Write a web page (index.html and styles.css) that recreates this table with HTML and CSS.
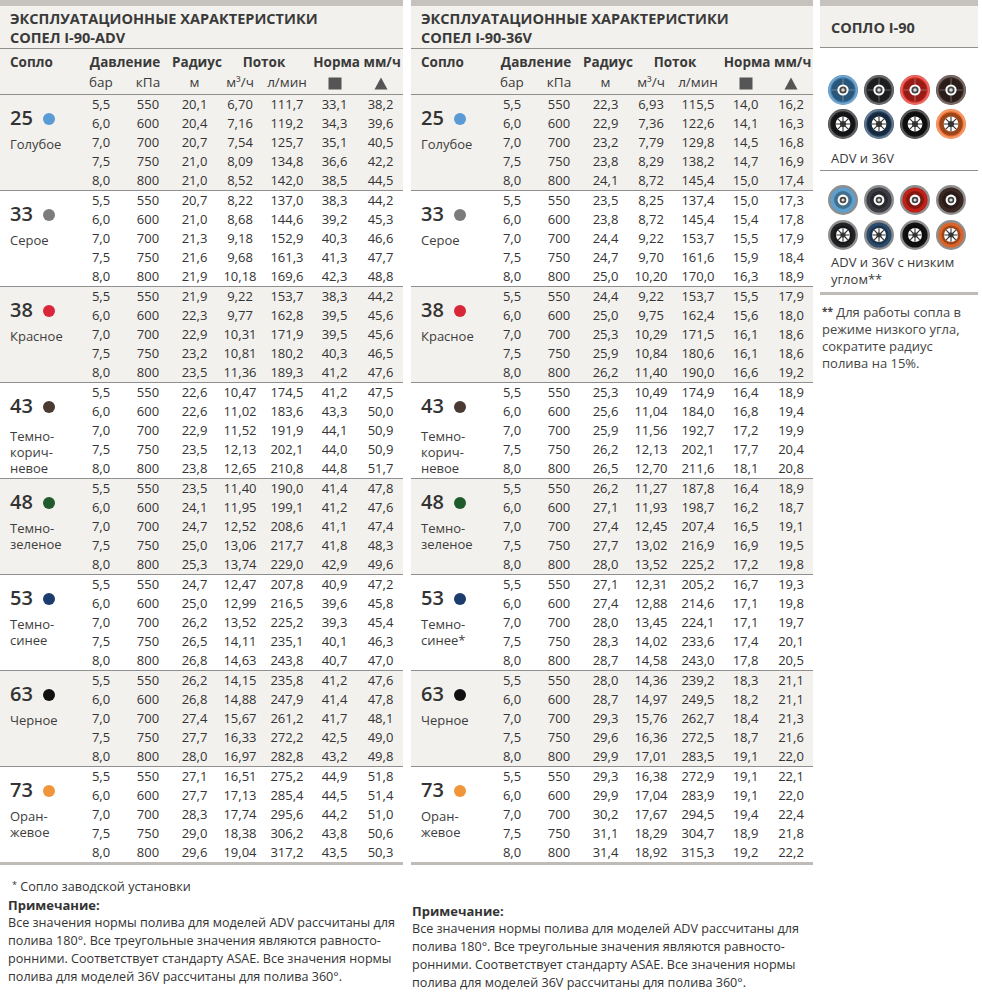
FILE: index.html
```html
<!DOCTYPE html>
<html lang="ru">
<head>
<meta charset="utf-8">
<title>Сопла I-90</title>
<link rel="stylesheet" href="styles.css">
</head>
<body>
<svg class="defs" aria-hidden="true">
  <symbol id="nzx" viewBox="0 0 30 30">
    <circle cx="15" cy="15" r="15" fill="currentColor"/>
    <circle cx="15" cy="15" r="13.7" fill="none" stroke="#fff" stroke-opacity=".3" stroke-width="2"/>
    <circle cx="15" cy="15" r="11.6" fill="#000" fill-opacity=".32"/>
    <path d="M15 3.5V26.5M3.5 15H26.5" stroke="#fff" stroke-opacity=".3" stroke-width="1.1"/>
    <circle cx="15" cy="15" r="5.6" fill="#fff"/>
    <circle cx="15" cy="15" r="3.6" fill="#444"/>
    <circle cx="15" cy="15" r="1.8" fill="#ddd"/>
  </symbol>
  <symbol id="nzs" viewBox="0 0 30 30">
    <circle cx="15" cy="15" r="15" fill="currentColor"/>
    <circle cx="15" cy="15" r="13.7" fill="none" stroke="#fff" stroke-opacity=".3" stroke-width="2"/>
    <circle cx="15" cy="15" r="11.6" fill="#000" fill-opacity=".35"/>
    <circle cx="15" cy="15" r="7.4" fill="#fff"/>
    <circle cx="15" cy="15" r="3.1" fill="#333"/>
    <path d="M18 15H22.4M17.1 17.1L20.2 20.2M15 18V22.4M12.9 17.1L9.8 20.2M12 15H7.6M12.9 12.9L9.8 9.8M15 12V7.6M17.1 12.9L20.2 9.8" stroke="#333" stroke-width="1.1"/>
  </symbol>
  <symbol id="nzl1" viewBox="0 0 30 30">
    <circle cx="15" cy="15" r="15" fill="#8e8e8e"/>
    <circle cx="15" cy="15" r="12.6" fill="currentColor"/>
    <circle cx="15" cy="15" r="9" fill="#000" fill-opacity=".3"/>
    <circle cx="15" cy="15" r="5.4" fill="#fff"/>
    <circle cx="15" cy="15" r="3.3" fill="#444"/>
    <circle cx="15" cy="15" r="1.6" fill="#ddd"/>
  </symbol>
  <symbol id="nzl2" viewBox="0 0 30 30">
    <circle cx="15" cy="15" r="15" fill="#8e8e8e"/>
    <circle cx="15" cy="15" r="12.6" fill="currentColor"/>
    <circle cx="15" cy="15" r="9.6" fill="#000" fill-opacity=".3"/>
    <circle cx="15" cy="15" r="7" fill="#fff"/>
    <circle cx="15" cy="15" r="2.8" fill="#333"/>
    <path d="M17.8 15H21.7M17 17L19.8 19.8M15 17.8V21.7M13 17L10.2 19.8M12.2 15H8.3M13 13L10.2 10.2M15 12.2V8.3M17 13L19.8 10.2" stroke="#333" stroke-width="1.1"/>
  </symbol>
</svg>

<div class="page">
  <!-- ADV table -->
  <section class="col col-adv">
    <div class="tbl">
      <div class="title">ЭКСПЛУАТАЦИОННЫЕ ХАРАКТЕРИСТИКИ<br>СОПЕЛ I-90-ADV</div>
      <div class="thead">
        <b class="h-l">Сопло</b><b class="s2">Давление</b><b>Радиус</b><b class="s2">Поток</b><b class="s2">Норма мм/ч</b>
        <span></span><span>бар</span><span>кПа</span><span>м</span><span>м³/ч</span><span>л/мин</span>
        <span><svg class="ico" viewBox="0 0 14 13"><rect x="0.5" y="0.5" width="13" height="12" fill="#555"/></svg></span>
        <span><svg class="ico" viewBox="0 0 14 13"><path d="M7 0.5L13.5 12.5H0.5Z" fill="#555"/></svg></span>
      </div>

      <div class="grp alt">
        <div class="nm"><div class="no">25<i class="dot d25"></i></div><div class="cn">Голубое</div></div>
        <span>5,5</span><span>550</span><span>20,1</span><span>6,70</span><span>111,7</span><span>33,1</span><span>38,2</span>
        <span>6,0</span><span>600</span><span>20,4</span><span>7,16</span><span>119,2</span><span>34,3</span><span>39,6</span>
        <span>7,0</span><span>700</span><span>20,7</span><span>7,54</span><span>125,7</span><span>35,1</span><span>40,5</span>
        <span>7,5</span><span>750</span><span>21,0</span><span>8,09</span><span>134,8</span><span>36,6</span><span>42,2</span>
        <span>8,0</span><span>800</span><span>21,0</span><span>8,52</span><span>142,0</span><span>38,5</span><span>44,5</span>
      </div>
      <div class="grp">
        <div class="nm"><div class="no">33<i class="dot d33"></i></div><div class="cn">Серое</div></div>
        <span>5,5</span><span>550</span><span>20,7</span><span>8,22</span><span>137,0</span><span>38,3</span><span>44,2</span>
        <span>6,0</span><span>600</span><span>21,0</span><span>8,68</span><span>144,6</span><span>39,2</span><span>45,3</span>
        <span>7,0</span><span>700</span><span>21,3</span><span>9,18</span><span>152,9</span><span>40,3</span><span>46,6</span>
        <span>7,5</span><span>750</span><span>21,6</span><span>9,68</span><span>161,3</span><span>41,3</span><span>47,7</span>
        <span>8,0</span><span>800</span><span>21,9</span><span>10,18</span><span>169,6</span><span>42,3</span><span>48,8</span>
      </div>
      <div class="grp alt">
        <div class="nm"><div class="no">38<i class="dot d38"></i></div><div class="cn">Красное</div></div>
        <span>5,5</span><span>550</span><span>21,9</span><span>9,22</span><span>153,7</span><span>38,3</span><span>44,2</span>
        <span>6,0</span><span>600</span><span>22,3</span><span>9,77</span><span>162,8</span><span>39,5</span><span>45,6</span>
        <span>7,0</span><span>700</span><span>22,9</span><span>10,31</span><span>171,9</span><span>39,5</span><span>45,6</span>
        <span>7,5</span><span>750</span><span>23,2</span><span>10,81</span><span>180,2</span><span>40,3</span><span>46,5</span>
        <span>8,0</span><span>800</span><span>23,5</span><span>11,36</span><span>189,3</span><span>41,2</span><span>47,6</span>
      </div>
      <div class="grp">
        <div class="nm"><div class="no">43<i class="dot d43"></i></div><div class="cn low">Темно-<br>корич-<br>невое</div></div>
        <span>5,5</span><span>550</span><span>22,6</span><span>10,47</span><span>174,5</span><span>41,2</span><span>47,5</span>
        <span>6,0</span><span>600</span><span>22,6</span><span>11,02</span><span>183,6</span><span>43,3</span><span>50,0</span>
        <span>7,0</span><span>700</span><span>22,9</span><span>11,52</span><span>191,9</span><span>44,1</span><span>50,9</span>
        <span>7,5</span><span>750</span><span>23,5</span><span>12,13</span><span>202,1</span><span>44,0</span><span>50,9</span>
        <span>8,0</span><span>800</span><span>23,8</span><span>12,65</span><span>210,8</span><span>44,8</span><span>51,7</span>
      </div>
      <div class="grp alt">
        <div class="nm"><div class="no">48<i class="dot d48"></i></div><div class="cn">Темно-<br>зеленое</div></div>
        <span>5,5</span><span>550</span><span>23,5</span><span>11,40</span><span>190,0</span><span>41,4</span><span>47,8</span>
        <span>6,0</span><span>600</span><span>24,1</span><span>11,95</span><span>199,1</span><span>41,2</span><span>47,6</span>
        <span>7,0</span><span>700</span><span>24,7</span><span>12,52</span><span>208,6</span><span>41,1</span><span>47,4</span>
        <span>7,5</span><span>750</span><span>25,0</span><span>13,06</span><span>217,7</span><span>41,8</span><span>48,3</span>
        <span>8,0</span><span>800</span><span>25,3</span><span>13,74</span><span>229,0</span><span>42,9</span><span>49,6</span>
      </div>
      <div class="grp">
        <div class="nm"><div class="no">53<i class="dot d53"></i></div><div class="cn">Темно-<br>синее</div></div>
        <span>5,5</span><span>550</span><span>24,7</span><span>12,47</span><span>207,8</span><span>40,9</span><span>47,2</span>
        <span>6,0</span><span>600</span><span>25,0</span><span>12,99</span><span>216,5</span><span>39,6</span><span>45,8</span>
        <span>7,0</span><span>700</span><span>26,2</span><span>13,52</span><span>225,2</span><span>39,3</span><span>45,4</span>
        <span>7,5</span><span>750</span><span>26,5</span><span>14,11</span><span>235,1</span><span>40,1</span><span>46,3</span>
        <span>8,0</span><span>800</span><span>26,8</span><span>14,63</span><span>243,8</span><span>40,7</span><span>47,0</span>
      </div>
      <div class="grp alt">
        <div class="nm"><div class="no">63<i class="dot d63"></i></div><div class="cn">Черное</div></div>
        <span>5,5</span><span>550</span><span>26,2</span><span>14,15</span><span>235,8</span><span>41,2</span><span>47,6</span>
        <span>6,0</span><span>600</span><span>26,8</span><span>14,88</span><span>247,9</span><span>41,4</span><span>47,8</span>
        <span>7,0</span><span>700</span><span>27,4</span><span>15,67</span><span>261,2</span><span>41,7</span><span>48,1</span>
        <span>7,5</span><span>750</span><span>27,7</span><span>16,33</span><span>272,2</span><span>42,5</span><span>49,0</span>
        <span>8,0</span><span>800</span><span>28,0</span><span>16,97</span><span>282,8</span><span>43,2</span><span>49,8</span>
      </div>
      <div class="grp last">
        <div class="nm"><div class="no">73<i class="dot d73"></i></div><div class="cn">Оран-<br>жевое</div></div>
        <span>5,5</span><span>550</span><span>27,1</span><span>16,51</span><span>275,2</span><span>44,9</span><span>51,8</span>
        <span>6,0</span><span>600</span><span>27,7</span><span>17,13</span><span>285,4</span><span>44,5</span><span>51,4</span>
        <span>7,0</span><span>700</span><span>28,3</span><span>17,74</span><span>295,6</span><span>44,2</span><span>51,0</span>
        <span>7,5</span><span>750</span><span>29,0</span><span>18,38</span><span>306,2</span><span>43,8</span><span>50,6</span>
        <span>8,0</span><span>800</span><span>29,6</span><span>19,04</span><span>317,2</span><span>43,5</span><span>50,3</span>
      </div>
    </div>
    <div class="foot">
      <p class="star"><small>*</small> Сопло заводской установки</p>
      <p class="nt-h">Примечание:</p>
      <p>Все значения нормы полива для моделей ADV рассчитаны для<br>полива 180°. Все треугольные значения являются равносто-<br>ронними. Соответствует стандарту ASAE. Все значения нормы<br>полива для моделей 36V рассчитаны для полива 360°.</p>
    </div>
  </section>

  <!-- 36V table -->
  <section class="col col-36v">
    <div class="tbl">
      <div class="title">ЭКСПЛУАТАЦИОННЫЕ ХАРАКТЕРИСТИКИ<br>СОПЕЛ I-90-36V</div>
      <div class="thead">
        <b class="h-l">Сопло</b><b class="s2">Давление</b><b>Радиус</b><b class="s2">Поток</b><b class="s2">Норма мм/ч</b>
        <span></span><span>бар</span><span>кПа</span><span>м</span><span>м³/ч</span><span>л/мин</span>
        <span><svg class="ico" viewBox="0 0 14 13"><rect x="0.5" y="0.5" width="13" height="12" fill="#555"/></svg></span>
        <span><svg class="ico" viewBox="0 0 14 13"><path d="M7 0.5L13.5 12.5H0.5Z" fill="#555"/></svg></span>
      </div>

      <div class="grp alt">
        <div class="nm"><div class="no">25<i class="dot d25"></i></div><div class="cn">Голубое</div></div>
        <span>5,5</span><span>550</span><span>22,3</span><span>6,93</span><span>115,5</span><span>14,0</span><span>16,2</span>
        <span>6,0</span><span>600</span><span>22,9</span><span>7,36</span><span>122,6</span><span>14,1</span><span>16,3</span>
        <span>7,0</span><span>700</span><span>23,2</span><span>7,79</span><span>129,8</span><span>14,5</span><span>16,8</span>
        <span>7,5</span><span>750</span><span>23,8</span><span>8,29</span><span>138,2</span><span>14,7</span><span>16,9</span>
        <span>8,0</span><span>800</span><span>24,1</span><span>8,72</span><span>145,4</span><span>15,0</span><span>17,4</span>
      </div>
      <div class="grp">
        <div class="nm"><div class="no">33<i class="dot d33"></i></div><div class="cn">Серое</div></div>
        <span>5,5</span><span>550</span><span>23,5</span><span>8,25</span><span>137,4</span><span>15,0</span><span>17,3</span>
        <span>6,0</span><span>600</span><span>23,8</span><span>8,72</span><span>145,4</span><span>15,4</span><span>17,8</span>
        <span>7,0</span><span>700</span><span>24,4</span><span>9,22</span><span>153,7</span><span>15,5</span><span>17,9</span>
        <span>7,5</span><span>750</span><span>24,7</span><span>9,70</span><span>161,6</span><span>15,9</span><span>18,4</span>
        <span>8,0</span><span>800</span><span>25,0</span><span>10,20</span><span>170,0</span><span>16,3</span><span>18,9</span>
      </div>
      <div class="grp alt">
        <div class="nm"><div class="no">38<i class="dot d38"></i></div><div class="cn">Красное</div></div>
        <span>5,5</span><span>550</span><span>24,4</span><span>9,22</span><span>153,7</span><span>15,5</span><span>17,9</span>
        <span>6,0</span><span>600</span><span>25,0</span><span>9,75</span><span>162,4</span><span>15,6</span><span>18,0</span>
        <span>7,0</span><span>700</span><span>25,3</span><span>10,29</span><span>171,5</span><span>16,1</span><span>18,6</span>
        <span>7,5</span><span>750</span><span>25,9</span><span>10,84</span><span>180,6</span><span>16,1</span><span>18,6</span>
        <span>8,0</span><span>800</span><span>26,2</span><span>11,40</span><span>190,0</span><span>16,6</span><span>19,2</span>
      </div>
      <div class="grp">
        <div class="nm"><div class="no">43<i class="dot d43"></i></div><div class="cn low">Темно-<br>корич-<br>невое</div></div>
        <span>5,5</span><span>550</span><span>25,3</span><span>10,49</span><span>174,9</span><span>16,4</span><span>18,9</span>
        <span>6,0</span><span>600</span><span>25,6</span><span>11,04</span><span>184,0</span><span>16,8</span><span>19,4</span>
        <span>7,0</span><span>700</span><span>25,9</span><span>11,56</span><span>192,7</span><span>17,2</span><span>19,9</span>
        <span>7,5</span><span>750</span><span>26,2</span><span>12,13</span><span>202,1</span><span>17,7</span><span>20,4</span>
        <span>8,0</span><span>800</span><span>26,5</span><span>12,70</span><span>211,6</span><span>18,1</span><span>20,8</span>
      </div>
      <div class="grp alt">
        <div class="nm"><div class="no">48<i class="dot d48"></i></div><div class="cn">Темно-<br>зеленое</div></div>
        <span>5,5</span><span>550</span><span>26,2</span><span>11,27</span><span>187,8</span><span>16,4</span><span>18,9</span>
        <span>6,0</span><span>600</span><span>27,1</span><span>11,93</span><span>198,7</span><span>16,2</span><span>18,7</span>
        <span>7,0</span><span>700</span><span>27,4</span><span>12,45</span><span>207,4</span><span>16,5</span><span>19,1</span>
        <span>7,5</span><span>750</span><span>27,7</span><span>13,02</span><span>216,9</span><span>16,9</span><span>19,5</span>
        <span>8,0</span><span>800</span><span>28,0</span><span>13,52</span><span>225,2</span><span>17,2</span><span>19,8</span>
      </div>
      <div class="grp">
        <div class="nm"><div class="no">53<i class="dot d53"></i></div><div class="cn">Темно-<br>синее*</div></div>
        <span>5,5</span><span>550</span><span>27,1</span><span>12,31</span><span>205,2</span><span>16,7</span><span>19,3</span>
        <span>6,0</span><span>600</span><span>27,4</span><span>12,88</span><span>214,6</span><span>17,1</span><span>19,8</span>
        <span>7,0</span><span>700</span><span>28,0</span><span>13,45</span><span>224,1</span><span>17,1</span><span>19,7</span>
        <span>7,5</span><span>750</span><span>28,3</span><span>14,02</span><span>233,6</span><span>17,4</span><span>20,1</span>
        <span>8,0</span><span>800</span><span>28,7</span><span>14,58</span><span>243,0</span><span>17,8</span><span>20,5</span>
      </div>
      <div class="grp alt">
        <div class="nm"><div class="no">63<i class="dot d63"></i></div><div class="cn">Черное</div></div>
        <span>5,5</span><span>550</span><span>28,0</span><span>14,36</span><span>239,2</span><span>18,3</span><span>21,1</span>
        <span>6,0</span><span>600</span><span>28,7</span><span>14,97</span><span>249,5</span><span>18,2</span><span>21,1</span>
        <span>7,0</span><span>700</span><span>29,3</span><span>15,76</span><span>262,7</span><span>18,4</span><span>21,3</span>
        <span>7,5</span><span>750</span><span>29,6</span><span>16,36</span><span>272,5</span><span>18,7</span><span>21,6</span>
        <span>8,0</span><span>800</span><span>29,9</span><span>17,01</span><span>283,5</span><span>19,1</span><span>22,0</span>
      </div>
      <div class="grp last">
        <div class="nm"><div class="no">73<i class="dot d73"></i></div><div class="cn">Оран-<br>жевое</div></div>
        <span>5,5</span><span>550</span><span>29,3</span><span>16,38</span><span>272,9</span><span>19,1</span><span>22,1</span>
        <span>6,0</span><span>600</span><span>29,9</span><span>17,04</span><span>283,9</span><span>19,1</span><span>22,0</span>
        <span>7,0</span><span>700</span><span>30,2</span><span>17,67</span><span>294,5</span><span>19,4</span><span>22,4</span>
        <span>7,5</span><span>750</span><span>31,1</span><span>18,29</span><span>304,7</span><span>18,9</span><span>21,8</span>
        <span>8,0</span><span>800</span><span>31,4</span><span>18,92</span><span>315,3</span><span>19,2</span><span>22,2</span>
      </div>
    </div>
    <div class="foot foot-36v">
      <p class="nt-h">Примечание:</p>
      <p>Все значения нормы полива для моделей ADV рассчитаны для<br>полива 180°. Все треугольные значения являются равносто-<br>ронними. Соответствует стандарту ASAE. Все значения нормы<br>полива для моделей 36V рассчитаны для полива 360°.</p>
    </div>
  </section>

  <!-- side panel -->
  <aside class="side">
    <div class="side-h">СОПЛО I-90</div>
    <div class="nz-set nz-set-1">
      <div class="nz-grid">
        <svg class="nz c-blue"><use href="#nzx"/></svg>
        <svg class="nz c-black"><use href="#nzx"/></svg>
        <svg class="nz c-red"><use href="#nzx"/></svg>
        <svg class="nz c-brown"><use href="#nzx"/></svg>
        <svg class="nz c-black2"><use href="#nzs"/></svg>
        <svg class="nz c-navy"><use href="#nzs"/></svg>
        <svg class="nz c-black3"><use href="#nzs"/></svg>
        <svg class="nz c-orange"><use href="#nzs"/></svg>
      </div>
      <p class="nz-cap">ADV и 36V</p>
    </div>
    <div class="nz-set nz-set-2">
      <div class="nz-grid">
        <svg class="nz l-blue"><use href="#nzl1"/></svg>
        <svg class="nz l-grey"><use href="#nzl1"/></svg>
        <svg class="nz l-red"><use href="#nzl1"/></svg>
        <svg class="nz l-brown"><use href="#nzl1"/></svg>
        <svg class="nz l-black"><use href="#nzl2"/></svg>
        <svg class="nz l-navy"><use href="#nzl2"/></svg>
        <svg class="nz l-black2"><use href="#nzl2"/></svg>
        <svg class="nz l-orange"><use href="#nzl2"/></svg>
      </div>
      <p class="nz-cap">ADV и 36V с низким<br>углом**</p>
    </div>
    <p class="side-note"><b>**</b> Для работы сопла в<br>режиме низкого угла,<br>сократите радиус<br>полива на 15%.</p>
  </aside>
</div>
</body>
</html>
```

FILE: styles.css
```css
* { box-sizing: border-box; }

body {
  margin: 0;
  background: #fff;
  color: #333;
  font-family: "Open Sans", "Noto Sans", sans-serif;
  font-size: 13px;
}

p { margin: 0; }

.defs {
  display: block;
  width: 0;
  height: 0;
  overflow: hidden;
}

.page {
  display: flex;
  align-items: flex-start;
  width: 982px;
}

.col-adv { width: 403px; }
.col-36v { width: 402px; margin-left: 8px; }
.side { width: 158px; margin-left: 7px; }

.col-adv .tbl { --cols: 78px 46px 48px 45px 46px 48px 47px 45px; }
.col-36v .tbl { --cols: 78px 46px 48px 45px 46px 48px 47px 44px; }

.tbl {
  border-top: 6px solid #c6c3bf;
}

.title {
  background: #f3f1ed;
  padding: 3px 10px 1px;
  font-size: 14.5px;
  font-weight: 700;
  line-height: 19px;
  color: #3a3a3a;
  border-bottom: 1px solid #8f8f8f;
  white-space: nowrap;
}

.thead {
  display: grid;
  grid-template-columns: var(--cols);
  grid-template-rows: 20px 20px;
  background: #f3f1ed;
  padding: 3px 0 2px;
  border-bottom: 1px solid #8f8f8f;
  line-height: 20px;
  text-align: center;
  white-space: nowrap;
  color: #3a3a3a;
}

.thead b {
  font-size: 13.5px;
  font-weight: 700;
}

.thead .s2 { grid-column: span 2; }
.thead .h-l { text-align: left; padding-left: 10px; }

.thead span {
  display: flex;
  align-items: center;
  justify-content: center;
  font-size: 13.5px;
}

.ico {
  width: 14px;
  height: 13px;
  margin-top: 2px;
}

.grp {
  display: grid;
  grid-template-columns: var(--cols);
  grid-template-rows: repeat(5, 19px);
  border-top: 1px solid #8f8f8f;
  line-height: 19px;
  text-align: center;
  white-space: nowrap;
}

.thead + .grp { border-top: 0; }

.grp.alt { background: #f3f1ed; }

.grp.last { border-bottom: 3px solid #bfbbb7; }

.nm {
  grid-column: 1;
  grid-row: 1 / 6;
  text-align: left;
  padding: 11px 0 0 10px;
}

.no {
  font-size: 20px;
  font-weight: 600;
  line-height: 24px;
  color: #333;
  display: flex;
  align-items: center;
}

.dot {
  display: inline-block;
  width: 12px;
  height: 12px;
  border-radius: 50%;
  margin-left: 10px;
  margin-top: 1px;
}

.d25 { background: #5b9bd5; }
.d33 { background: #7c7c7c; }
.d38 { background: #d92638; }
.d43 { background: #4b3a32; }
.d48 { background: #1f5b2b; }
.d53 { background: #1d3c6e; }
.d63 { background: #111; }
.d73 { background: #f1953b; }

.cn {
  margin-top: 6px;
  font-size: 13px;
  line-height: 16px;
  color: #3d3d3d;
}

.cn.low { margin-top: 10px; }

.foot {
  padding: 11px 0 0 8px;
  font-size: 12.6px;
  line-height: 18px;
  white-space: nowrap;
  color: #333;
}

.foot-36v { padding-top: 37px; padding-left: 1px; }

.star { padding-left: 4px; }
.star small { font-size: 9px; vertical-align: 3px; }

.nt-h { font-weight: 700; font-size: 13px; }

/* side panel */
.side-h {
  border-top: 6px solid #c6c3bf;
  background: #f3f1ed;
  height: 48px;
  padding: 12px 0 0 11px;
  font-size: 14.5px;
  font-weight: 700;
  line-height: 20px;
  color: #3a3a3a;
  border-bottom: 1px solid #8f8f8f;
}

.nz-grid {
  display: grid;
  grid-template-columns: repeat(4, 30px);
  grid-auto-rows: 30px;
  column-gap: 6px;
  row-gap: 4px;
  padding-left: 8px;
}

.nz {
  width: 30px;
  height: 30px;
  display: block;
}

.nz-set-1 {
  padding-top: 27px;
  padding-bottom: 3px;
  border-bottom: 1px solid #8f8f8f;
}

.nz-set-2 {
  padding-top: 14px;
  padding-bottom: 4px;
  border-bottom: 3px solid #bfbbb7;
}

.nz-set-2 .nz-grid { row-gap: 5px; }

.nz-cap {
  padding-left: 11px;
  font-size: 13px;
  line-height: 17px;
  color: #3a3a3a;
  white-space: nowrap;
}

.nz-set-1 .nz-cap { margin-top: 11px; }
.nz-set-2 .nz-cap { margin-top: 4px; }

.side-note {
  padding: 8px 0 0 2px;
  font-size: 13px;
  line-height: 17px;
  color: #444;
  white-space: nowrap;
}

.side-note b { font-size: 10px; vertical-align: 2px; }

.c-blue { color: #3d7fb3; }
.c-black { color: #2a2b2e; }
.c-red { color: #dc2a22; }
.c-brown { color: #3e2b26; }
.c-black2 { color: #1e1f22; }
.c-navy { color: #22405f; }
.c-black3 { color: #151516; }
.c-orange { color: #ee6d2a; }

.l-blue { color: #5f9fcb; }
.l-grey { color: #3a3d42; }
.l-red { color: #bf2119; }
.l-brown { color: #3b2723; }
.l-black { color: #222326; }
.l-navy { color: #2b4b6c; }
.l-black2 { color: #121213; }
.l-orange { color: #dd6428; }
```
